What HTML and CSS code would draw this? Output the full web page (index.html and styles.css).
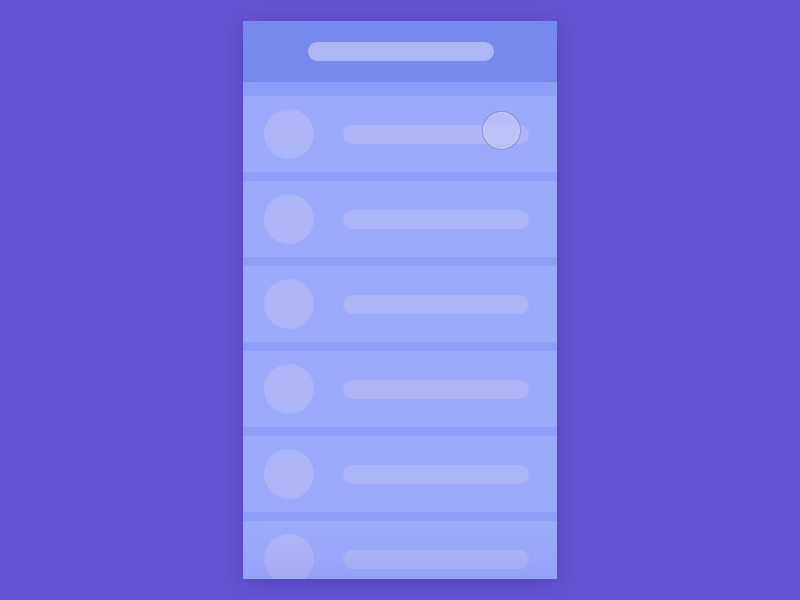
FILE: index.html
```html
<!DOCTYPE html>
<html>
<head>
<meta charset="utf-8">
<link rel="stylesheet" href="styles.css">
</head>
<body>
<div class="phone">
  <div class="header"><div class="title-bar"></div></div>
  <div class="list">
    <div class="row"><div class="avatar"></div><div class="line"></div><div class="touch"></div></div>
    <div class="row"><div class="avatar"></div><div class="line"></div></div>
    <div class="row"><div class="avatar"></div><div class="line"></div></div>
    <div class="row"><div class="avatar"></div><div class="line"></div></div>
    <div class="row"><div class="avatar"></div><div class="line"></div></div>
    <div class="row"><div class="avatar"></div><div class="line"></div></div>
  </div>
  <div class="fade"></div>
</div>
</body>
</html>
```
FILE: styles.css
```css
html, body {
  margin: 0;
  padding: 0;
  background: #6655d4;
  width: 800px;
  height: 600px;
  overflow: hidden;
}
.phone {
  position: relative;
  width: 314px;
  height: 558px;
  margin: 21px auto 0;
  background: #8d9ff6;
  overflow: hidden;
  box-shadow: 0 4px 24px rgba(60, 40, 150, 0.45);
}
.header {
  height: 61px;
  background: #7589ee;
  display: flex;
  justify-content: center;
  align-items: flex-start;
  padding-top: 21px;
  box-sizing: border-box;
}
.title-bar {
  width: 186px;
  height: 19px;
  border-radius: 10px;
  background: #adb6f7;
  margin-left: 2px;
}
.list {
  padding-top: 14px;
  display: flex;
  flex-direction: column;
  gap: 9px;
}
.row {
  position: relative;
  height: 76px;
  flex-shrink: 0;
  background: #9caafb;
  display: flex;
  align-items: center;
  padding-left: 21px;
  box-sizing: border-box;
}
.avatar {
  width: 50px;
  height: 50px;
  border-radius: 50%;
  background: #adb5f8;
}
.line {
  width: 186px;
  height: 19px;
  border-radius: 10px;
  background: #adb5f8;
  margin-left: 29px;
}
.touch {
  position: absolute;
  left: 239px;
  top: 15px;
  width: 37px;
  height: 37px;
  border-radius: 50%;
  background: rgba(200, 205, 245, 0.55);
  border: 1px solid rgba(130, 135, 175, 0.8);
  box-shadow: 0 0 2px rgba(255, 255, 255, 0.6) inset;
}
.fade {
  position: absolute;
  left: 0;
  right: 0;
  bottom: 0;
  height: 40px;
  background: linear-gradient(to bottom, rgba(100, 90, 210, 0), rgba(100, 90, 210, 0.12));
  pointer-events: none;
}
```
